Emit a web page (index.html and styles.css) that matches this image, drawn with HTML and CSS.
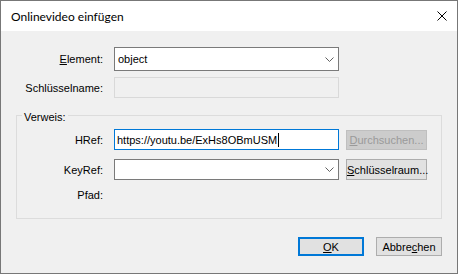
FILE: index.html
```html
<!DOCTYPE html>
<html lang="de">
<head>
  <meta charset="UTF-8" />
  <title>Onlinevideo einfügen</title>
  <link rel="stylesheet" href="styles.css">
</head>
<body>
  <div class="dialog">
    <div class="titlebar">
      <span class="title">Onlinevideo einfügen</span>
      <svg class="close" width="10" height="10" viewBox="0 0 10 10">
        <path d="M0.5 0.5 L9.5 9.5 M9.5 0.5 L0.5 9.5" stroke="#000" stroke-width="1" fill="none"/>
      </svg>
    </div>

    <div class="content">
      <div class="row row-tall">
        <label class="label"><u>E</u>lement:</label>
        <div class="combo">
          <span class="value">object</span>
          <svg class="chevron" width="9" height="5" viewBox="0 0 9 5">
            <path d="M0.5 0.5 L4.5 4.5 L8.5 0.5" stroke="#606060" stroke-width="1" fill="none"/>
          </svg>
        </div>
      </div>

      <div class="row row-second">
        <label class="label">Schlüsselname:</label>
        <div class="textbox disabled"></div>
      </div>

      <fieldset class="group">
        <legend>Verweis:</legend>

        <div class="row">
          <label class="label">HRef:</label>
          <div class="textbox focused">
            <span class="value">https://youtu.be/ExHs8OBmUSM</span><span class="caret"></span>
          </div>
          <button class="btn side disabled-btn" disabled><u>D</u>urchsuchen...</button>
        </div>

        <div class="row row-gap">
          <label class="label">KeyRef:</label>
          <div class="combo small">
            <span class="value"></span>
            <svg class="chevron" width="9" height="5" viewBox="0 0 9 5">
              <path d="M0.5 0.5 L4.5 4.5 L8.5 0.5" stroke="#606060" stroke-width="1" fill="none"/>
            </svg>
          </div>
          <button class="btn side"><u>S</u>chlüsselraum...</button>
        </div>

        <div class="row row-path">
          <label class="label">Pfad:</label>
        </div>
      </fieldset>

      <div class="actions">
        <button class="btn default"><u>O</u>K</button>
        <button class="btn">Abbre<u>c</u>hen</button>
      </div>
    </div>
  </div>
</body>
</html>
```

FILE: styles.css
```css
* {
  box-sizing: border-box;
}
body {
  margin: 0;
  font-family: "Liberation Sans", Arial, sans-serif;
  font-size: 11px;
  color: #000;
  background: #f0f0f0;
}
.dialog {
  width: 458px;
  height: 274px;
  border: 1px solid #777;
  background: #f0f0f0;
}
.titlebar {
  height: 30px;
  background: #fff;
  display: flex;
  align-items: center;
  justify-content: space-between;
  padding: 0 10px 0 10px;
}
.title {
  font-family: Lato, "Noto Sans", sans-serif;
  font-size: 12px;
  color: #000;
}
.close {
  display: block;
  margin-top: -1px;
}
.content {
  padding: 16px 15px 0;
}
.row {
  display: flex;
  align-items: center;
  height: 21px;
}
.row-tall {
  height: 24px;
}
.row-second {
  margin-top: 6px;
}
.row-gap {
  margin-top: 9px;
}
.row-path {
  margin-top: 4px;
}
.label {
  width: 87px;
  margin-right: 11px;
  text-align: right;
  white-space: nowrap;
}
.group .label {
  width: 86px;
}
.combo,
.textbox {
  width: 225px;
  height: 100%;
  display: flex;
  align-items: center;
  justify-content: space-between;
  padding: 0 4px 0 3px;
  background: #fff;
  border: 1px solid #7a7a7a;
}
.textbox {
  justify-content: flex-start;
  padding-left: 2px;
}
.textbox.disabled {
  background: #f0f0f0;
  border-color: #d9d9d9;
}
.textbox.focused {
  border-color: #0078d7;
}
.caret {
  display: inline-block;
  width: 1px;
  height: 14px;
  margin-left: 1px;
  background: #000;
}
.chevron {
  display: block;
}
.group {
  margin: 9px 0 0;
  padding: 5px 14px 13px 0;
  border: 1px solid #dcdcdc;
  min-width: 0;
}
.group legend {
  padding: 4px 2px 0;
  margin-left: 5px;
  line-height: 13px;
}
.btn {
  font-family: "Liberation Sans", Arial, sans-serif;
  font-size: 11px;
  color: #000;
  background: #e1e1e1;
  border: 1px solid #adadad;
  padding: 0;
  height: 19px;
  width: 66px;
}
.btn.side {
  width: 81px;
  height: 21px;
  margin-left: 7px;
}
.btn.disabled-btn {
  background: #cccccc;
  border-color: #bfbfbf;
  color: #9a9a9a;
  height: 20px;
  margin-top: 1px;
}
.btn.default {
  border: 2px solid #0078d7;
}
.actions {
  display: flex;
  justify-content: flex-end;
  gap: 12px;
  margin-top: 18px;
}
```
